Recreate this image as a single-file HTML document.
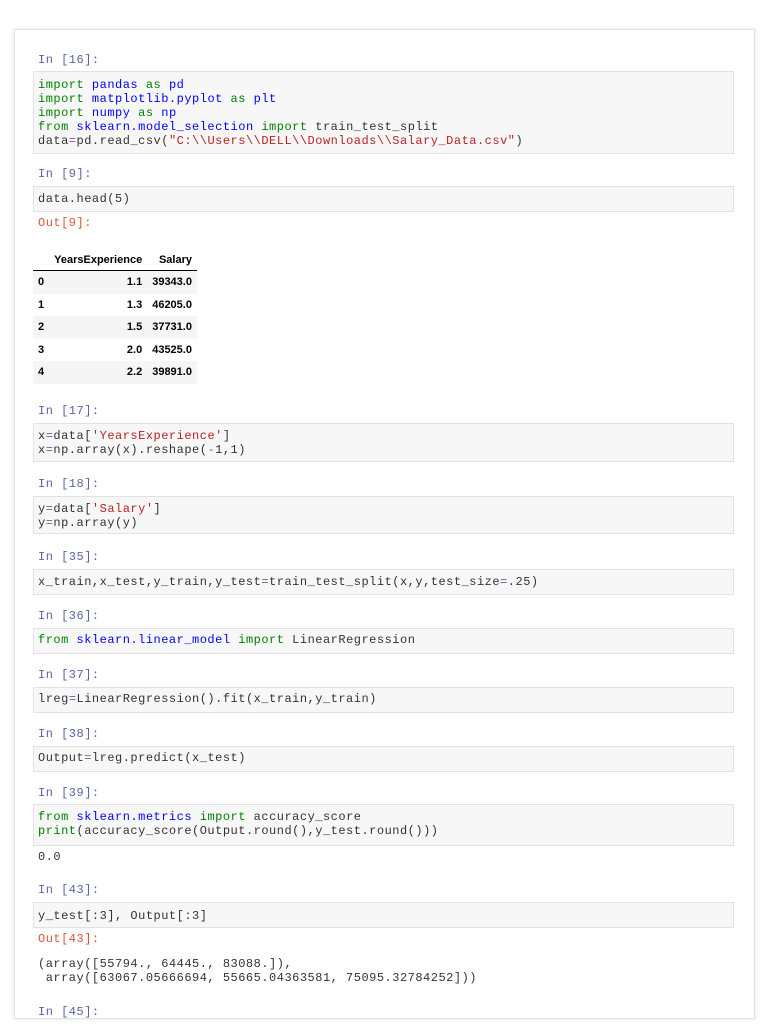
<!DOCTYPE html>
<html><head><meta charset="utf-8"><style>
body{margin:0;width:768px;height:1024px;background:#fff;position:relative;overflow:hidden;font-family:"Liberation Mono",monospace;}
.card{position:absolute;left:14px;top:29px;width:739px;height:988px;background:#fff;border:1px solid #e4e4e4;box-shadow:0 0 4px rgba(0,0,0,.12);}
.p{position:absolute;left:38px;font-size:12px;letter-spacing:0.5px;line-height:14px;color:#5a64a8;white-space:pre;}
.o{color:#d8573a;}
.box{position:absolute;left:33px;width:701px;background:#f7f7f7;border:1px solid #e2e2e2;box-sizing:border-box;}
.t{position:absolute;left:38px;font-size:12px;letter-spacing:0.5px;line-height:14px;color:#333;white-space:pre;}
.k{color:#008000;}
.n{color:#0000ff;}
.s{color:#ba2121}
.op{color:#7a5a9a}
table{position:absolute;left:33px;top:249px;border-collapse:collapse;font-family:"Liberation Sans",sans-serif;font-size:11px;color:#000;}
th{font-weight:bold;text-align:right;padding:0 5px;height:21px;border-bottom:1px solid #000}
td{text-align:right;padding:0 5px;height:22.5px;font-weight:bold}
td:first-child{text-align:left;}
tr.g td{background:#f5f5f5}
</style></head><body>
<div class="card"></div>

<div class="p" style="top:53px">In [16]:</div>
<div class="box" style="top:71px;height:83px"></div>
<div class="t" style="top:78px"><span class="k">import</span> <span class="n">pandas</span> <span class="k">as</span> <span class="n">pd</span>
<span class="k">import</span> <span class="n">matplotlib.pyplot</span> <span class="k">as</span> <span class="n">plt</span>
<span class="k">import</span> <span class="n">numpy</span> <span class="k">as</span> <span class="n">np</span>
<span class="k">from</span> <span class="n">sklearn.model_selection</span> <span class="k">import</span> train_test_split
data<span class="op">=</span>pd.read_csv(<span class="s">"C:\\Users\\DELL\\Downloads\\Salary_Data.csv"</span>)</div>

<div class="p" style="top:167px">In [9]:</div>
<div class="box" style="top:186px;height:26px"></div>
<div class="t" style="top:192px">data.head(5)</div>
<div class="p o" style="top:216px">Out[9]:</div>

<table>
<tr><th></th><th>YearsExperience</th><th>Salary</th></tr>
<tr class="g"><td>0</td><td>1.1</td><td>39343.0</td></tr>
<tr><td>1</td><td>1.3</td><td>46205.0</td></tr>
<tr class="g"><td>2</td><td>1.5</td><td>37731.0</td></tr>
<tr><td>3</td><td>2.0</td><td>43525.0</td></tr>
<tr class="g"><td>4</td><td>2.2</td><td>39891.0</td></tr>
</table>

<div class="p" style="top:404px">In [17]:</div>
<div class="box" style="top:423px;height:39px"></div>
<div class="t" style="top:429px">x<span class="op">=</span>data[<span class="s">'YearsExperience'</span>]
x<span class="op">=</span>np.array(x).reshape(<span class="op">-</span>1,1)</div>

<div class="p" style="top:477px">In [18]:</div>
<div class="box" style="top:496px;height:38px"></div>
<div class="t" style="top:502px">y<span class="op">=</span>data[<span class="s">'Salary'</span>]
y<span class="op">=</span>np.array(y)</div>

<div class="p" style="top:550px">In [35]:</div>
<div class="box" style="top:569px;height:26px"></div>
<div class="t" style="top:575px">x_train,x_test,y_train,y_test<span class="op">=</span>train_test_split(x,y,test_size<span class="op">=</span>.25)</div>

<div class="p" style="top:609px">In [36]:</div>
<div class="box" style="top:628px;height:26px"></div>
<div class="t" style="top:633px"><span class="k">from</span> <span class="n">sklearn.linear_model</span> <span class="k">import</span> LinearRegression</div>

<div class="p" style="top:668px">In [37]:</div>
<div class="box" style="top:687px;height:26px"></div>
<div class="t" style="top:692px">lreg<span class="op">=</span>LinearRegression().fit(x_train,y_train)</div>

<div class="p" style="top:727px">In [38]:</div>
<div class="box" style="top:746px;height:26px"></div>
<div class="t" style="top:751px">Output<span class="op">=</span>lreg.predict(x_test)</div>

<div class="p" style="top:786px">In [39]:</div>
<div class="box" style="top:804px;height:42px"></div>
<div class="t" style="top:810px"><span class="k">from</span> <span class="n">sklearn.metrics</span> <span class="k">import</span> accuracy_score
<span class="k">print</span>(accuracy_score(Output.round(),y_test.round()))</div>
<div class="t" style="top:850px">0.0</div>

<div class="p" style="top:883px">In [43]:</div>
<div class="box" style="top:902px;height:26px"></div>
<div class="t" style="top:909px">y_test[:3], Output[:3]</div>
<div class="p o" style="top:932px">Out[43]:</div>
<div class="t" style="top:957px">(array([55794., 64445., 83088.]),
 array([63067.05666694, 55665.04363581, 75095.32784252]))</div>

<div class="p" style="top:1005px">In [45]:</div>
</body></html>
